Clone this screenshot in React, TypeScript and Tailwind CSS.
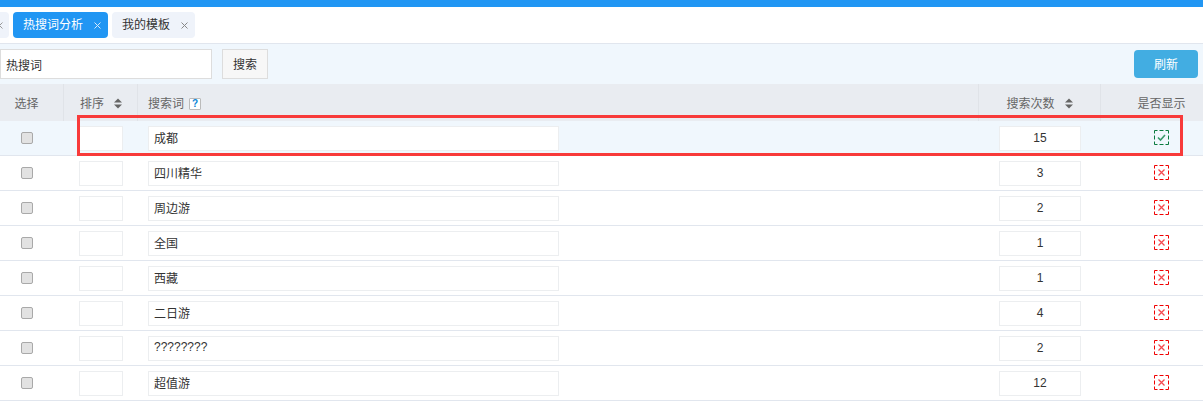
import React from 'react';

const rows = [
  { word: '成都', count: '15', shown: true },
  { word: '四川精华', count: '3', shown: false },
  { word: '周边游', count: '2', shown: false },
  { word: '全国', count: '1', shown: false },
  { word: '西藏', count: '1', shown: false },
  { word: '二日游', count: '4', shown: false },
  { word: '????????', count: '2', shown: false },
  { word: '超值游', count: '12', shown: false },
];

const SortIcon = () => (
  <svg width="8" height="11" viewBox="0 0 8 11" className="ml-[10px]">
    <path d="M4 0.5 L8 4.5 H0 Z M4 10.5 L0 6.5 H8 Z" fill="#666" />
  </svg>
);

const CloseIcon = ({ color, className }: { color: string; className: string }) => (
  <svg width="7" height="7" viewBox="0 0 7 7" className={className}>
    <path d="M0.5 0.5 L6.5 6.5 M6.5 0.5 L0.5 6.5" fill="none" stroke={color} strokeWidth="1" />
  </svg>
);

const StatusIcon = ({ shown }: { shown: boolean }) => {
  const color = shown ? '#0a7a3e' : '#f00000';
  return (
    <svg width="15" height="15" viewBox="0 0 15 15">
      <rect x="0.5" y="0.5" width="14" height="14" fill="none" stroke={color} strokeDasharray="3 2 4 2 3 0" />
      {shown ? (
        <path d="M4 7.5 L6.5 10 L11 5" fill="none" stroke="#3a9a6a" strokeWidth="1.6" />
      ) : (
        <path d="M4.5 4.5 L10.5 10.5 M10.5 4.5 L4.5 10.5" fill="none" stroke="#f5484f" strokeWidth="1.3" />
      )}
    </svg>
  );
};

export default function App() {
  return (
    <div className="relative h-[405px] w-[1203px] overflow-hidden bg-white text-[12px] text-[#333]" style={{ fontFamily: '"Liberation Sans", "Noto Sans CJK SC", sans-serif' }}>
      <div className="h-[7px] bg-[#2196f3]" />

      {/* Tabs */}
      <div className="flex h-[37px] items-start gap-[4px] border-b border-[#e1e6ee] pt-[5px]">
        <div className="flex h-[26px] w-[9px] items-center overflow-hidden rounded-r-[4px] bg-[#eff3fa]">
          <CloseIcon color="#999" className="-ml-[4px] shrink-0" />
        </div>
        <div className="flex h-[26px] w-[95px] items-center rounded-[4px] bg-[#2196f3] pl-[10px] text-white">
          <span>热搜词分析</span>
          <CloseIcon color="#d5e9fb" className="ml-[11px]" />
        </div>
        <div className="flex h-[26px] w-[83px] items-center rounded-[4px] bg-[#eff3fa] pl-[10px]">
          <span>我的模板</span>
          <CloseIcon color="#888" className="ml-[11px]" />
        </div>
      </div>

      {/* Toolbar */}
      <div className="flex h-[40px] items-center bg-[#f0f7fd] pr-[5px]">
        <input readOnly value="热搜词" className="h-[30px] w-[212px] border border-[#dddddd] bg-white pl-[5px] text-[12px] text-[#333] outline-none" />
        <button className="ml-[10px] h-[30px] w-[46px] border border-[#dddddd] bg-[#f7f7f7] pt-[1px] text-[12px] text-[#333]">搜索</button>
        <button className="ml-auto h-[28px] w-[64px] rounded-[4px] bg-[#42ade2] pt-[1px] text-[12px] text-white">刷新</button>
      </div>

      {/* Table header */}
      <div className="flex h-[37px] items-center bg-[#e9ecf1] text-[#666]">
        <div className="flex h-full w-[64px] items-center justify-center border-r border-[#e0e3e8] pr-[10px] pt-[2px]">选择</div>
        <div className="flex h-full w-[74px] items-center border-r border-[#e0e3e8] pl-[16px] pt-[2px]">排序<SortIcon /></div>
        <div className="flex h-full flex-1 items-center border-r border-[#e0e3e8] pl-[10px] pt-[2px]">
          搜索词
          <span className="ml-[5px] flex h-[12px] w-[12px] items-center justify-center rounded-[1px] border border-[#bbb] bg-white text-[10px] font-bold leading-none text-[#0b85d6]">?</span>
        </div>
        <div className="flex h-full w-[122px] items-center justify-center border-r border-[#e0e3e8] pt-[2px]">搜索次数<SortIcon /></div>
        <div className="flex h-full w-[102px] items-center justify-center pl-[19px] pt-[2px]">是否显示</div>
      </div>

      {/* Rows */}
      {rows.map((row, i) => (
        <div key={i} className={`flex h-[35px] items-center border-b border-[#e1e6ee] ${i === 0 ? 'bg-[#f0f7fd]' : 'bg-white'}`}>
          <div className="flex w-[64px] justify-center pr-[10px]">
            <span className="block h-[12px] w-[12px] rounded-[2px] border border-[#a9a9a9] bg-[#e2e2e2]" />
          </div>
          <div className="w-[74px] pl-[15px]">
            <div className="h-[25px] w-[44px] border border-[#eceef0] bg-white" />
          </div>
          <div className="flex-1 pl-[10px]">
            <input readOnly value={row.word} className="h-[25px] w-[411px] border border-[#eceef0] bg-white pb-[2px] pl-[5px] text-[12px] text-[#333] outline-none" />
          </div>
          <div className="w-[122px] pl-[20px]">
            <input readOnly value={row.count} className="h-[25px] w-[82px] border border-[#eceef0] bg-white pb-[1px] text-center text-[12px] text-[#333] outline-none" />
          </div>
          <div className="flex w-[102px] justify-center pb-[2px] pl-[18px]">
            <StatusIcon shown={row.shown} />
          </div>
        </div>
      ))}

      {/* Red highlight annotation */}
      <div className="pointer-events-none absolute left-[77px] top-[115px] h-[41px] w-[1106px] border-[3px] border-[#f83a3a]" />
    </div>
  );
}
